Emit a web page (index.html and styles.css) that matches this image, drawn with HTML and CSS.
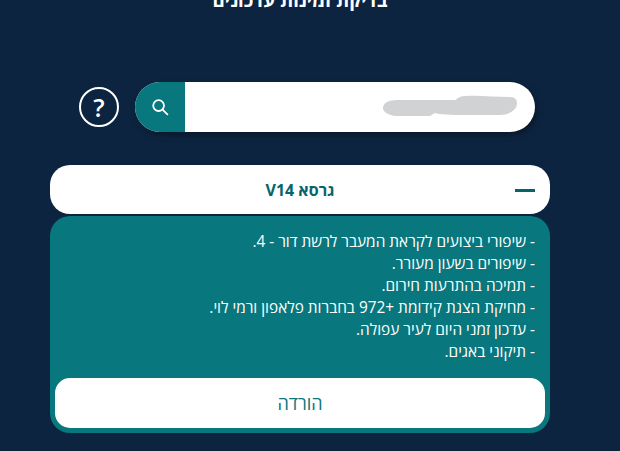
FILE: index.html
```html
<!DOCTYPE html>
<html lang="he" dir="rtl">
<head>
<meta charset="utf-8">
<title>בדיקת זמינות עדכונים</title>
<link rel="stylesheet" href="styles.css">
</head>
<body>
<main class="page">
  <h1 class="title">בדיקת זמינות עדכונים</h1>
  <div class="search-row">
    <div class="search">
      <div class="search-input">
        <svg class="scribble" viewBox="0 0 136 24" aria-hidden="true"><path d="M135 8c0-4-3-6-8-6-14 0-30-2-44-1-5 0-8 2-10 4H14C6 5 0 8 0 13c0 4 5 7 12 8h34c3 0 4-2 6-3 8 2 22 2 36 2h30c9 0 17-5 17-12z"/></svg>
      </div>
      <button class="search-btn" aria-label="חיפוש">
        <svg viewBox="0 0 18 18" width="18" height="18" aria-hidden="true"><circle cx="7.6" cy="7.6" r="5.4"/><path d="M11.6 11.6 16.4 16.4"/></svg>
      </button>
    </div>
    <button class="help" aria-label="עזרה">?</button>
  </div>
  <section class="accordion">
    <header class="acc-head">
      <span class="acc-title">גרסא V14</span>
      <span class="acc-minus"></span>
    </header>
    <div class="acc-body">
      <ul class="changes">
        <li>- שיפורי ביצועים לקראת המעבר לרשת דור - 4.</li>
        <li>- שיפורים בשעון מעורר.</li>
        <li>- תמיכה בהתרעות חירום.</li>
        <li>- מחיקת הצגת קידומת +972 בחברות פלאפון ורמי לוי.</li>
        <li>- עדכון זמני היום לעיר עפולה.</li>
        <li>- תיקוני באגים.</li>
      </ul>
      <button class="download">הורדה</button>
    </div>
  </section>
</main>
</body>
</html>
```
FILE: styles.css
```css
html, body {
  margin: 0;
  height: 451px;
  overflow: hidden;
  background: #0d2440;
}
.page {
  width: 500px;
  margin: -12px 70px 0 50px;
  font-family: "Open Sans", "Noto Sans", sans-serif;
}
.title {
  margin: 0;
  height: 24px;
  font-size: 18.6px;
  line-height: 24px;
  font-weight: 700;
  color: #fff;
  text-align: center;
}
.search-row {
  display: flex;
  align-items: center;
  gap: 16px;
  margin: 70px 15px 0 29px;
}
.search {
  flex: 1;
  display: flex;
  height: 50px;
  border-radius: 25px;
  overflow: hidden;
  background: #fff;
  box-shadow: 2px 3px 6px rgba(0, 0, 0, .35);
}
.search-input {
  flex: 1;
  display: flex;
  align-items: center;
  padding-right: 17px;
}
.scribble {
  width: 135px;
  height: 24px;
  fill: #d1d2d4;
}
.search-btn {
  width: 50px;
  border: 0;
  padding: 0;
  display: flex;
  align-items: center;
  justify-content: center;
  background: #08777e;
}
.search-btn svg {
  fill: none;
  stroke: #fff;
  stroke-width: 1.8;
  stroke-linecap: round;
}
.help {
  width: 40px;
  height: 40px;
  box-sizing: border-box;
  padding: 0;
  border: 2px solid #fff;
  border-radius: 50%;
  background: transparent;
  color: #fff;
  font: 600 25px/34px "Open Sans", sans-serif;
}
.accordion {
  margin-top: 33px;
}
.acc-head {
  position: relative;
  z-index: 1;
  height: 49px;
  display: flex;
  align-items: center;
  justify-content: center;
  border-radius: 20px;
  background: #fff;
}
.acc-title {
  font-size: 16px;
  font-weight: 700;
  color: #06656c;
}
.acc-minus {
  position: absolute;
  right: 15px;
  top: 24px;
  width: 20px;
  height: 3px;
  background: #06656c;
}
.acc-body {
  margin-top: 2px;
  padding: 15px 5px 5px;
  border-radius: 20px;
  background: #08777e;
}
.changes {
  list-style: none;
  margin: 0;
  padding: 0 10px;
  color: #fff;
  font-size: 15.4px;
  font-weight: 500;
  line-height: 22px;
}
.download {
  display: block;
  width: 100%;
  height: 50px;
  margin-top: 15px;
  border: 0;
  border-radius: 15px;
  background: #fff;
  color: #08777e;
  font: 400 18px "Open Sans", sans-serif;
}
```
